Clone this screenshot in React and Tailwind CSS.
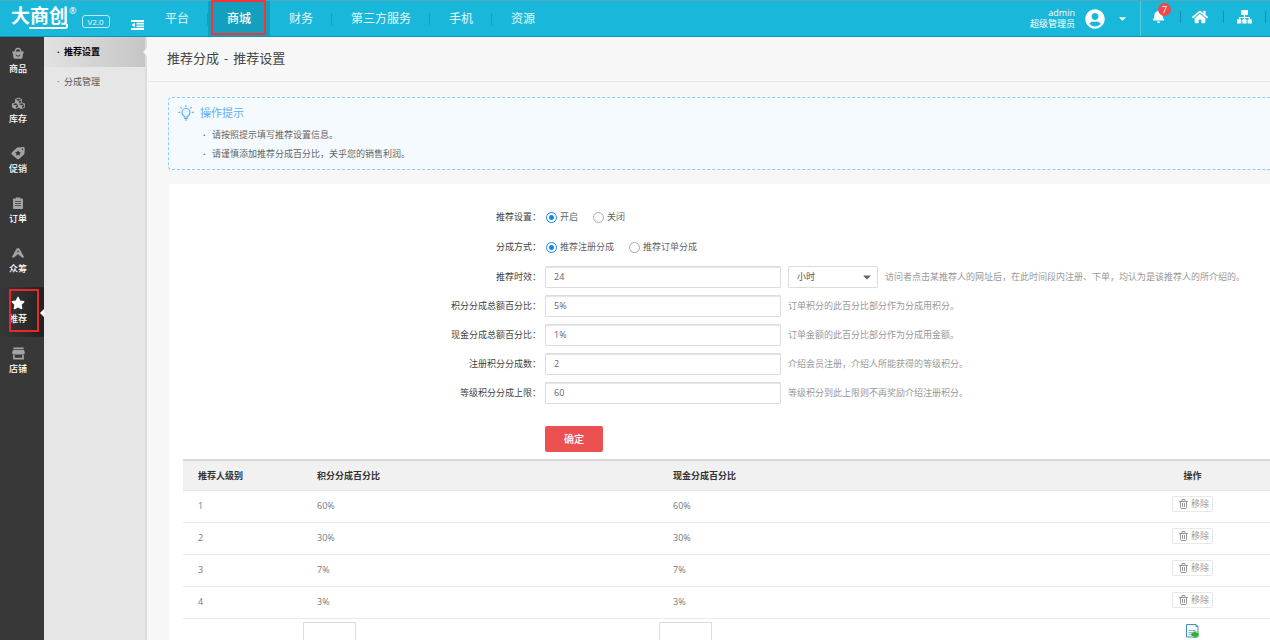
import { FaBell, FaCaretDown, FaCubes, FaHome, FaStar, FaUserCircle } from "react-icons/fa";

const BasketIcon = () => (
    <svg width="12" height="12" viewBox="0 0 12 12" fill="none">
        <path d="M2.5 5.5 4 2.2C4.4 1.2 7.6 1.2 8 2.2L9.5 5.5" stroke="currentColor" strokeWidth="1.4"/>
        <path d="M.3 4.6h11.4v1.6h-.6l-.6 4.6c-.1.6-.5 1-1.1 1H2.6c-.6 0-1-.4-1.1-1L.9 6.2H.3z" fill="currentColor"/>
        <path d="M3.8 7.8c.8 1.8 3.6 1.8 4.4 0" stroke="#333" strokeWidth="1"/>
    </svg>
);

const TagIcon = () => (
    <svg width="14" height="13" viewBox="0 0 14 13">
        <path d="M6.6.6 12.3 0c.8 0 1.5.7 1.5 1.5l-.4 5.2c0 .4-.2.7-.4.9l-5 4.5c-.5.5-1.3.5-1.8 0L.8 7.4c-.5-.5-.5-1.3 0-1.8L5.6 1c.3-.2.6-.4 1-.4z" fill="currentColor"/>
        <path d="m7 3.2.9 1.800 2 .3-1.400 1.400.3 2L7 7.800l-1.800.9.3-2-1.400-1.400 2-.3z" fill="#333"/>
        <circle cx="11.4" cy="2.3" r=".8" fill="#333"/>
    </svg>
);

const ClipboardIcon = () => (
    <svg width="10" height="12" viewBox="0 0 10 12">
        <path d="M1 1.500h2V.5h4v1h2c.6 0 1 .4 1 1V11c0 .6-.4 1-1 1H1c-.6 0-1-.4-1-1V2.500c0-.6.4-1 1-1z" fill="currentColor"/>
        <path d="M2 4.500h6M2 6.500h6M2 8.500h6" stroke="#444" strokeWidth=".8"/>
    </svg>
);

const CrowdIcon = () => (
    <svg width="12" height="10" viewBox="0 0 12 10" fill="none" stroke="currentColor" strokeWidth="2" strokeLinejoin="round" strokeLinecap="round">
        <path d="M1.2 8.8 5.3 1.300h1.400l4.100 7.500L8.500 7 6 4.800 3.500 7z"/>
    </svg>
);

const ShopIcon = () => (
    <svg width="13" height="13" viewBox="0 0 14 13" fill="currentColor">
        <path d="M1.5 0h11v2h-11zM1 2.6h12l.9 3.400c0 .9-.8 1.500-1.700 1.500H1.800C.8 7.500.1 6.900.1 6z"/>
        <path d="M1.2 8h1.800v3.200h8V8h1.800v5H1.200z"/>
    </svg>
);

const CollapseIcon = () => (
    <svg width="13" height="10" viewBox="0 0 13 10" fill="currentColor">
        <path d="M0 0h13v2H0zM5.5 2.8H13v1.8H5.500zM5.500 5.400H13v1.800H5.500zM0 8h13v2H0zM3.800 2.800v4.400L.5 5z"/>
    </svg>
);

const SitemapIcon = () => (
    <svg width="15" height="14" viewBox="0 0 15 14" fill="currentColor">
        <rect x="4" width="7" height="5" rx=".8"/>
        <path d="M6.9 5h1.2v2H13v2.5h-1.2V8H8.1v1.5H6.9V8H3.2v1.5H2V7h4.9z"/>
        <rect y="9.3" width="4.3" height="4.3" rx=".6"/>
        <rect x="5.3" y="9.3" width="4.3" height="4.3" rx=".6"/>
        <rect x="10.6" y="9.3" width="4.3" height="4.3" rx=".6"/>
    </svg>
);

const BulbIcon = () => (
    <svg width="16" height="16" viewBox="0 0 16 16" fill="none" stroke="currentColor" strokeWidth="1.2" strokeLinecap="round">
        <path d="M6.2 12V11C4.8 10.3 4 9 4 7.5a4 4 0 0 1 8 0c0 1.500-.8 2.800-2.200 3.500v1z"/>
        <path d="M6.5 13.5h3M7.3 15h1.4M8 .7v1M.8 7.300h1M14.200 7.300h1M2.600 2.400l.7.7M13.400 2.400l-.7.7"/>
    </svg>
);

const TrashIcon = () => (
    <svg width="9" height="10" viewBox="0 0 9 10" fill="none" stroke="currentColor">
        <path d="M0 2.5h9M3 2.5v-2h3v2M1.5 2.5v6c0 .6.4 1 1 1h4c.6 0 1-.4 1-1v-6M3.5 4v4M5.5 4v4"/>
    </svg>
);

const AddIcon = () => (
    <svg width="13" height="14" viewBox="0 0 13 14" fill="none">
        <path d="M.5.5H10l2 2v10.5H.5z" fill="#f2f9fd" stroke="#4a8fb8"/>
        <path d="M10 .5v2h2" stroke="#4a8fb8"/>
        <path d="M2.5 6.5h7M2.5 8.5h5M2.5 10.5h4" stroke="#8db4cc"/>
        <path d="M7.5 7.5h3V9H12.5v3h-2v1.5h-3V12h-2V9h2z" fill="#2fb41f"/>
    </svg>
);

const navItems = ["平台", "商城", "财务", "第三方服务", "手机", "资源"];

const sideItems = [
    { name: "商品", icon: <BasketIcon/> },
    { name: "库存", icon: <FaCubes size={13}/> },
    { name: "促销", icon: <TagIcon/> },
    { name: "订单", icon: <ClipboardIcon/> },
    { name: "众筹", icon: <CrowdIcon/> },
    { name: "推荐", icon: <FaStar size={14}/>, active: true },
    { name: "店铺", icon: <ShopIcon/> },
];

const fields = [
    { id: "expire", label: "推荐时效", value: "24", hint: "访问者点击某推荐人的网址后，在此时间段内注册、下单，均认为是该推荐人的所介绍的。", unit: true },
    { id: "pointAll", label: "积分分成总额百分比", value: "5%", hint: "订单积分的此百分比部分作为分成用积分。" },
    { id: "moneyAll", label: "现金分成总额百分比", value: "1%", hint: "订单金额的此百分比部分作为分成用金额。" },
    { id: "registerPoint", label: "注册积分分成数", value: "2", hint: "介绍会员注册，介绍人所能获得的等级积分。" },
    { id: "registerUp", label: "等级积分分成上限", value: "60", hint: "等级积分到此上限则不再奖励介绍注册积分。" },
];

const levels = [
    { level: 1, point: "60%", money: "60%" },
    { level: 2, point: "30%", money: "30%" },
    { level: 3, point: "7%", money: "7%" },
    { level: 4, point: "3%", money: "3%" },
];

const Header = () => (
    <header className="flex h-[37px] shrink-0 border-t border-b border-t-[#4fa9bd] border-b-[#0a93b3] bg-[#19b7da] text-white">
        <div className="flex w-[146px] shrink-0 items-start pl-[11px]">
            <a href="#" className="flex items-start pt-1">
                <span className="relative flex h-6 items-center pb-[2px] text-[19px] font-bold">
                    大商创
                    <span className="absolute right-0 bottom-0 left-[18px] h-[5px] rounded-br-[3px] border-r-2 border-b-2 border-white"/>
                </span>
                <span className="ml-px text-[9px] leading-3">®</span>
            </a>
            <span className="mt-[14px] ml-[5px] h-[13px] rounded-[3px] border border-white/70 px-[5px] text-[8px] leading-[11px] text-white/90">V2.0</span>
            <button aria-label="收起菜单" className="mt-[19px] ml-auto mr-[2px]"><CollapseIcon/></button>
        </div>
        <nav className="flex items-center text-[12px]">
            {navItems.map((name) => name === "商城" ? (
                <a key={name} href="#" className="relative flex h-full items-center bg-[#149fbf] px-[19px] font-medium">
                    {name}
                    <span className="absolute -top-px right-1 left-[3px] h-[35px] border-2 border-[#f5333a]"/>
                </a>
            ) : (
                <a key={name} href="#" className="flex h-3 items-center border-r border-[#149fc0] pr-[18px] pl-[19px] text-white/90 last:border-0">{name}</a>
            ))}
        </nav>
        <div className="ml-auto flex items-center">
            <div className="pb-[2px] text-right text-[9px] leading-[11px]">
                <div>admin</div>
                <div>超级管理员</div>
            </div>
            <FaUserCircle size={20} className="ml-[10px]"/>
            <button aria-label="账户菜单" className="mx-3"><FaCaretDown size={11}/></button>
            <div className="flex h-full items-center border-l border-white/25 pb-1">
                <a href="#" aria-label="消息" className="relative flex w-[39px] justify-center pr-1">
                    <FaBell size={13}/>
                    <span className="absolute -top-[7px] left-[17px] h-[13px] w-[13px] rounded-full bg-[#f0484d] text-center text-[9px] leading-[13px]">7</span>
                </a>
                <a href="#" aria-label="首页" className="flex h-3 w-[43px] items-center justify-center border-l border-[#1293b1] pr-1"><FaHome size={16}/></a>
                <a href="#" aria-label="站点地图" className="flex h-3 w-[43px] items-center justify-center border-x border-[#1293b1]"><SitemapIcon/></a>
                <span className="w-1"/>
            </div>
        </div>
    </header>
);

const Sidebar = () => (
    <aside className="w-11 shrink-0 bg-[#383838] text-[9px] font-medium text-white">
        {sideItems.map((item) => (
            <a key={item.name} href="#" className={`relative flex h-[50px] flex-col items-center pt-[9px] pr-2 ${item.active ? "bg-gradient-to-r from-[#383838] to-[#222]" : ""}`}>
                <span className={`flex h-[14px] items-center ${item.active ? "text-white" : "text-[#a3a3a3]"}`}>{item.icon}</span>
                <span className="mt-[3px] leading-3">{item.name}</span>
                {item.active && (
                    <>
                        <span className="absolute top-[2px] left-[9px] h-[43px] w-[30px] border-2 border-[#e8282c]"/>
                        <span className="absolute top-[22px] right-0 h-0 w-0 border-y-4 border-r-4 border-y-transparent border-r-white"/>
                    </>
                )}
            </a>
        ))}
    </aside>
);

const SubMenu = () => (
    <aside className="w-[103px] shrink-0 border-r-2 border-[#dcdcdc] bg-[#e6e6e6] text-[9px]">
        <a href="#" className="relative flex h-[30px] items-center bg-gradient-to-r from-[#e2e2e2] to-[#c6c6c6] pl-[13px] font-bold text-black">
            <span className="w-[7px]">·</span>推荐设置
            <span className="absolute top-[11px] -right-[2px] h-0 w-0 border-y-4 border-r-4 border-y-transparent border-r-[#f7f7f7]"/>
        </a>
        <a href="#" className="flex h-[30px] items-center pl-[13px] text-[#555]">
            <span className="w-[7px]">·</span>分成管理
        </a>
    </aside>
);

const Radio = ({ name, label, checked }) => (
    <label className="mr-[15px] flex items-center gap-[3px] text-[#666]">
        <input type="radio" name={name} defaultChecked={checked} className="h-[11px] w-[11px] appearance-none rounded-full border border-[#aaa] bg-white checked:border-[#1b85e8] checked:bg-[radial-gradient(circle,#1b85e8_2px,white_3px)]"/>
        {label}
    </label>
);

const Tips = () => (
    <section className="ml-[21px] h-[73px] rounded-l border border-r-0 border-dashed border-[#8ecbf7] bg-[#f5fafe] pt-[7px] pl-[9px]">
        <h2 className="flex h-4 items-center gap-[6px] text-[11px] text-[#5aaefa]"><BulbIcon/>操作提示</h2>
        <ul className="mt-1 pl-[25px] text-[9px] leading-[19px] text-[#666]">
            <li><span className="inline-block w-[9px] font-bold">·</span>请按照提示填写推荐设置信息。</li>
            <li><span className="inline-block w-[9px] font-bold">·</span>请谨慎添加推荐分成百分比，关乎您的销售利润。</li>
        </ul>
    </section>
);

const SettingForm = () => (
    <form className="text-[9px] text-[#444]">
        <div className="flex h-[30px] items-center">
            <span className="w-[377px] shrink-0 pr-[5px] text-right">推荐设置：</span>
            <Radio name="on" label="开启" checked/>
            <Radio name="on" label="关闭"/>
        </div>
        <div className="flex h-[30px] items-center">
            <span className="w-[377px] shrink-0 pr-[5px] text-right">分成方式：</span>
            <Radio name="separate_by" label="推荐注册分成" checked/>
            <Radio name="separate_by" label="推荐订单分成"/>
        </div>
        {fields.map((f) => (
            <div key={f.id} className="flex h-[29px] items-center">
                <label htmlFor={f.id} className="w-[376px] shrink-0 pr-1 text-right">{f.label}：</label>
                <input id={f.id} defaultValue={f.value} className="h-[22px] w-[236px] shrink-0 rounded-[1px] border border-[#ddd] bg-white px-2 text-[#666] shadow-[inset_0_1px_1px_#e4e4e4]"/>
                {f.unit && (
                    <div className="relative ml-[7px] shrink-0">
                        <select aria-label="时效单位" className="h-[22px] w-[90px] appearance-none rounded-[1px] border border-[#ddd] bg-white px-2 text-[#555]">
                            <option>小时</option>
                        </select>
                        <FaCaretDown size={12} className="pointer-events-none absolute top-[5px] right-[5px] text-[#666]"/>
                    </div>
                )}
                <span className="ml-[7px] whitespace-nowrap text-[#999]">{f.hint}</span>
            </div>
        ))}
        <button type="button" className="mt-[19px] ml-[376px] h-[26px] w-[58px] rounded-[2px] bg-[#ec5051] text-[10px] font-medium text-white">确定</button>
    </form>
);

const LevelTable = () => (
    <table className="w-full table-fixed border-t-2 border-[#d8d8d8] text-left text-[9px]">
        <thead>
        <tr className="h-[30px] border-b border-[#e6e6e6] bg-[#f1f1f1] text-[#333]">
            <th className="w-[119px] pl-[15px] font-bold">推荐人级别</th>
            <th className="w-[356px] pl-[15px] font-bold">积分分成百分比</th>
            <th className="pl-[15px] font-bold">现金分成百分比</th>
            <th className="w-[155px] text-center font-bold">操作</th>
        </tr>
        </thead>
        <tbody className="text-[#777]">
        {levels.map((row) => (
            <tr key={row.level} className="h-8 border-b border-[#ebebeb]">
                <td className="pl-[15px]">{row.level}</td>
                <td className="pl-[15px]">{row.point}</td>
                <td className="pl-[15px]">{row.money}</td>
                <td className="pb-1 text-center">
                    <button className="inline-flex h-4 w-[41px] items-center justify-end gap-[3px] rounded-[2px] border border-[#e8e8e8] pr-[3px] align-middle text-[#999]">
                        <TrashIcon/>移除
                    </button>
                </td>
            </tr>
        ))}
        <tr className="h-8 align-top">
            <td/>
            <td className="pt-[3px] pl-px"><input aria-label="积分分成百分比" className="block h-[22px] w-[53px] border border-[#ddd] px-2"/></td>
            <td className="pt-[3px] pl-px"><input aria-label="现金分成百分比" className="block h-[22px] w-[53px] border border-[#ddd] px-2"/></td>
            <td className="pt-[5px]"><button aria-label="添加" className="mx-auto block"><AddIcon/></button></td>
        </tr>
        </tbody>
    </table>
);

const App = () => (
    <div className="flex h-screen flex-col overflow-hidden bg-[#f7f7f7] font-['Open_Sans','Noto_Sans_CJK_SC',sans-serif]">
        <Header/>
        <div className="flex min-h-0 flex-1">
            <Sidebar/>
            <SubMenu/>
            <main className="min-w-0 flex-1 overflow-hidden">
                <h1 className="flex h-[45px] items-center gap-[5px] border-b border-[#e6eaef] pl-5 text-[13px] text-[#444]">
                    <span>推荐分成</span>
                    <span>-</span>
                    <span>推荐设置</span>
                </h1>
                <div className="pt-[15px]">
                    <Tips/>
                    <div className="mt-[14px] ml-[22px] bg-white pt-[18px]">
                        <SettingForm/>
                        <div className="mt-[7px] ml-[14px]">
                            <LevelTable/>
                        </div>
                    </div>
                </div>
            </main>
        </div>
    </div>
);

export default App;
